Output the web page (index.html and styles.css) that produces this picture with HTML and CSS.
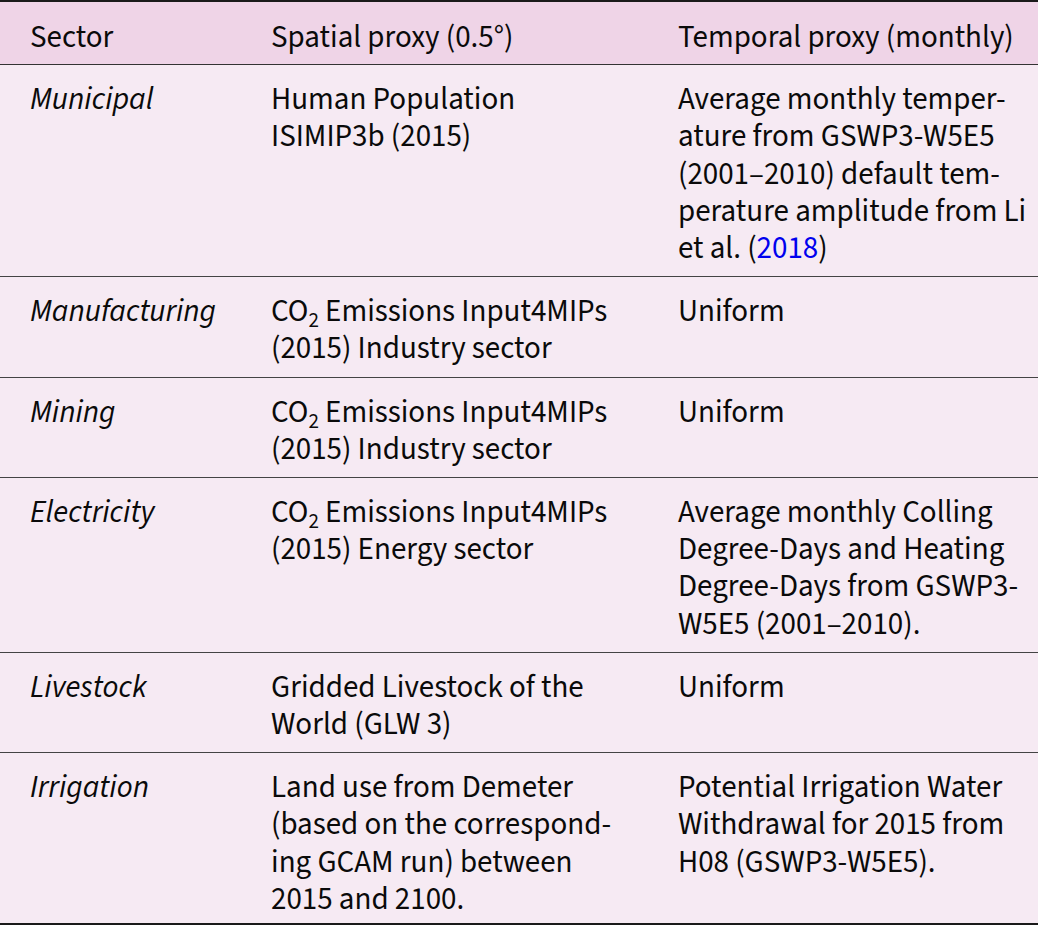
FILE: index.html
```html
<!DOCTYPE html>
<html>
<head>
<meta charset="utf-8">
<link rel="stylesheet" href="styles.css">
</head>
<body>
<table class="tbl">
  <colgroup><col class="c1"><col class="c2"><col class="c3"></colgroup>
  <thead>
    <tr><th>Sector</th><th>Spatial proxy (0.5°)</th><th>Temporal proxy (monthly)</th></tr>
  </thead>
  <tbody>
    <tr>
      <td class="sec">Municipal</td>
      <td>Human Population<br>ISIMIP3b (2015)</td>
      <td>Average monthly temper-<br>ature from GSWP3-W5E5<br>(2001–2010) default tem-<br>perature amplitude from Li<br>et al. (<a class="ref">2018</a>)</td>
    </tr>
    <tr>
      <td class="sec">Manufacturing</td>
      <td>CO<sub>2</sub> Emissions Input4MIPs<br>(2015) Industry sector</td>
      <td>Uniform</td>
    </tr>
    <tr>
      <td class="sec">Mining</td>
      <td>CO<sub>2</sub> Emissions Input4MIPs<br>(2015) Industry sector</td>
      <td>Uniform</td>
    </tr>
    <tr>
      <td class="sec">Electricity</td>
      <td>CO<sub>2</sub> Emissions Input4MIPs<br>(2015) Energy sector</td>
      <td>Average monthly Colling<br>Degree-Days and Heating<br>Degree-Days from GSWP3-<br>W5E5 (2001–2010).</td>
    </tr>
    <tr>
      <td class="sec">Livestock</td>
      <td>Gridded Livestock of the<br>World (GLW 3)</td>
      <td>Uniform</td>
    </tr>
    <tr class="last">
      <td class="sec">Irrigation</td>
      <td>Land use from Demeter<br>(based on the correspond-<br>ing GCAM run) between<br>2015 and 2100.</td>
      <td>Potential Irrigation Water<br>Withdrawal for 2015 from<br>H08 (GSWP3-W5E5).</td>
    </tr>
  </tbody>
</table>
</body>
</html>
```
FILE: styles.css
```css
html, body {
  margin: 0;
  padding: 0;
  background: #ffffff;
}
.tbl {
  width: 1038px;
  border-collapse: collapse;
  table-layout: fixed;
  font-family: "Source Sans 3", "Source Sans Pro", Lato, "Noto Sans", sans-serif;
  font-size: 31px;
  line-height: 37.2px;
  color: #0a0a0a;
  border-top: 2px solid #1a1a1a;
  border-bottom: 2px solid #1a1a1a;
}
.c1 { width: 256px; }
.c2 { width: 407px; }
.c3 { width: 375px; }
.tbl th {
  background: #efd4e7;
  font-weight: normal;
  text-align: left;
  padding: 17px 15px 8px 15px;
  border-bottom: 1.5px solid #333333;
  white-space: nowrap;
}
.tbl td {
  background: #f6eaf3;
  vertical-align: top;
  padding: 16px 15px 9px 15px;
  border-bottom: 1px solid #444444;
  white-space: nowrap;
}
.tbl th:first-child,
.tbl td:first-child {
  padding-left: 30px;
}
.tbl tr.last td {
  border-bottom: none;
  padding-bottom: 5px;
}
.sec {
  font-style: italic;
}
.ref {
  color: #0000ee;
}
sub {
  font-size: 0.68em;
  line-height: 0;
  vertical-align: -0.3em;
}
```
